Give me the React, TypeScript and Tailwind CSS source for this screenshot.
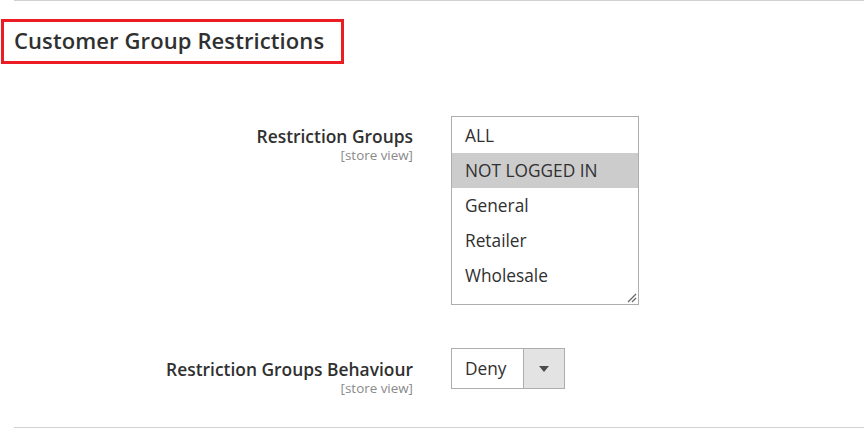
import React from "react";

const options = ["ALL", "NOT LOGGED IN", "General", "Retailer", "Wholesale"];

function Label({ title }: { title: string }) {
  return (
    <div className="w-[399px] shrink-0 text-right">
      <div className="text-[17.4px] leading-[22px] font-semibold text-[#303030]">{title}</div>
      <div className="text-[13.4px] leading-[16px] text-[#8a8a8a]">[store view]</div>
    </div>
  );
}

export default function App() {
  return (
    <div
      className="w-[864px] h-[428px] bg-white overflow-hidden"
      style={{ fontFamily: '"Open Sans", "Noto Sans", sans-serif' }}
    >
      <div className="ml-[14px] h-px bg-[#d1d1d1]" />
      <div className="mt-[18px] ml-[1px] w-[343px] h-[45px] border-[3px] border-[#ec1c24] flex items-center pl-[10px] pb-[4px]">
        <span className="text-[22px] font-semibold text-[#303030] leading-none tracking-[0.1px]">
          Customer Group Restrictions
        </span>
      </div>

      <div className="mt-[52px] flex items-start pl-[14px]">
        <div className="pt-[9px]">
          <Label title="Restriction Groups" />
        </div>
        <div className="ml-[38px] relative w-[188px] h-[189px] border border-[#adadad] pt-[1px]">
          {options.map((o) => (
            <div
              key={o}
              className={
                "h-[35px] flex items-center pl-[13px] text-[17.3px] text-[#303030] " +
                (o === "NOT LOGGED IN" ? "bg-[#cccccc]" : "")
              }
            >
              {o}
            </div>
          ))}
          <svg
            className="absolute right-[1px] bottom-[1px]"
            width="10"
            height="10"
            viewBox="0 0 10 10"
          >
            <line x1="1" y1="9" x2="9" y2="1" stroke="#6a6a6a" strokeWidth="1.2" />
            <line x1="5" y1="9" x2="9" y2="5" stroke="#6a6a6a" strokeWidth="1.2" />
          </svg>
        </div>
      </div>

      <div className="mt-[43px] h-[48px] flex items-start pl-[14px]">
        <div className="pt-[10px]">
          <Label title="Restriction Groups Behaviour" />
        </div>
        <div className="ml-[38px] flex w-[114px] h-[41px] border border-[#adadad]">
          <div className="w-[72px] flex items-center pl-[13px] text-[17.3px] text-[#303030] border-r border-[#adadad]">
            Deny
          </div>
          <div className="flex-1 bg-[#e3e3e3] flex items-center justify-center">
            <svg width="10" height="6" viewBox="0 0 10 6">
              <polygon points="0,0 10,0 5,6" fill="#514943" />
            </svg>
          </div>
        </div>
      </div>

      <div className="mt-[31px] ml-[14px] h-px bg-[#d1d1d1]" />
    </div>
  );
}
